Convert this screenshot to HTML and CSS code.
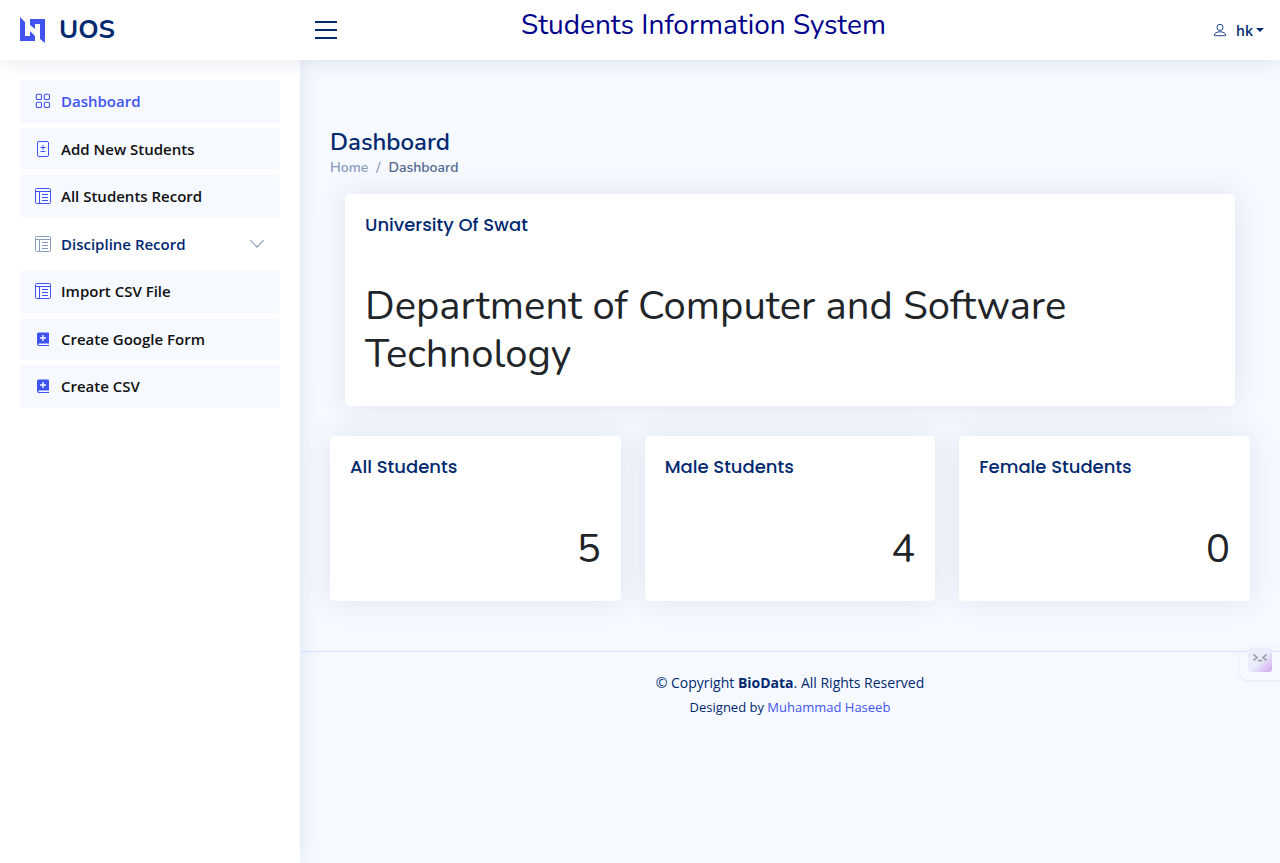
FILE: index.html
```html
<!DOCTYPE html>
<html lang="en">
<head>
<meta charset="utf-8">
<meta name="viewport" content="width=device-width, initial-scale=1">
<title>Dashboard - UOS</title>
<link rel="stylesheet" href="styles.css">
</head>
<body>
<svg class="sprite" aria-hidden="true">
  <symbol id="i-layout" viewBox="0 0 16 16">
    <path fill="none" stroke="currentColor" d="M1.5.5h13a1 1 0 0 1 1 1v13a1 1 0 0 1-1 1h-13a1 1 0 0 1-1-1v-13a1 1 0 0 1 1-1zM.5 3.500h15M4.500 3.500v12M7 6.500h6M7 9.500h6M7 12.500h6"/>
  </symbol>
  <symbol id="i-book" viewBox="0 0 16 16">
    <path fill="currentColor" fill-rule="evenodd" d="M3.500 1.500h9.500a1 1 0 0 1 1 1v10H4a.8.8 0 0 0 0 1.500h10v1H4a2 2 0 0 1-2-2V3a1.500 1.500 0 0 1 1.500-1.500zM7.300 4v2.300H5v1.400h2.300V10h1.400V7.700H11V6.300H8.700V4z"/>
  </symbol>
</svg>

<header class="header">
  <div class="brand">
    <a class="logo" href="#">
      <svg width="26" height="26" viewBox="0 0 26 26" aria-hidden="true"><path fill="#4154f1" d="M0 0l5 5v14h5v-5l5 5v5H0zM10 2h15v24l-5-4V7h-5v5l-5-4z"/></svg>
      <span>UOS</span>
    </a>
    <button class="toggle" type="button" aria-label="Toggle sidebar">
      <svg width="22" height="18" viewBox="0 0 22 18" aria-hidden="true"><path d="M0 1h22M0 9h22M0 17h22" stroke="currentColor" stroke-width="2"/></svg>
    </button>
  </div>
  <p class="system-name">Students Information System</p>
  <button class="profile" type="button">
    <svg width="14" height="14" viewBox="0 0 16 16" fill="none" stroke="currentColor" aria-hidden="true"><circle cx="8" cy="5" r="3.500"/><path d="M1.500 14c0-2.500 3-4 6.500-4s6.500 1.500 6.500 4c0 .3-.2.500-.5.500H2c-.3 0-.5-.2-.5-.5z"/></svg>
    <span>hk</span>
    <i class="caret"></i>
  </button>
</header>

<div class="layout">
  <nav class="sidebar" aria-label="Main">
    <a class="nav-link active" href="#"><svg viewBox="0 0 16 16" fill="none" stroke="currentColor" stroke-width="1.100" aria-hidden="true"><rect x="1.300" y="1.300" width="5.200" height="5.200" rx="1.300"/><rect x="9.300" y="1.300" width="5.200" height="5.200" rx="1.300"/><rect x="1.300" y="9.300" width="5.200" height="5.200" rx="1.300"/><rect x="9.300" y="9.300" width="5.200" height="5.200" rx="1.300"/></svg>Dashboard</a>
    <a class="nav-link" href="#"><svg viewBox="0 0 16 16" fill="none" stroke="currentColor" aria-hidden="true"><rect x="2.500" y=".5" width="11" height="15" rx="1.500"/><path d="M5.500 6.500h5M8 4v5M5.500 10.500h5"/></svg>Add New Students</a>
    <a class="nav-link" href="#"><svg aria-hidden="true"><use href="#i-layout"/></svg>All Students Record</a>
    <a class="nav-link collapsed" href="#"><svg aria-hidden="true"><use href="#i-layout"/></svg>Discipline Record<svg class="chevron" viewBox="0 0 16 16" fill="none" stroke="currentColor" stroke-width="1.200" stroke-linecap="round" stroke-linejoin="round" aria-hidden="true"><path d="M1.700 4.700L8 11l6.300-6.300"/></svg></a>
    <a class="nav-link" href="#"><svg aria-hidden="true"><use href="#i-layout"/></svg>Import CSV File</a>
    <a class="nav-link" href="#"><svg aria-hidden="true"><use href="#i-book"/></svg>Create Google Form</a>
    <a class="nav-link" href="#"><svg aria-hidden="true"><use href="#i-book"/></svg>Create CSV</a>
  </nav>

  <div class="page">
    <main class="main">
      <h1 class="page-title">Dashboard</h1>
      <nav class="breadcrumb" aria-label="Breadcrumb"><a href="#">Home</a><span>/</span><span class="current">Dashboard</span></nav>
      <section class="card banner">
        <h2 class="card-title">University Of Swat</h2>
        <p class="display">Department of Computer and Software Technology</p>
      </section>
      <div class="stats">
        <section class="card"><h2 class="card-title">All Students</h2><p class="display number">5</p></section>
        <section class="card"><h2 class="card-title">Male Students</h2><p class="display number">4</p></section>
        <section class="card"><h2 class="card-title">Female Students</h2><p class="display number">0</p></section>
      </div>
    </main>
    <footer class="footer">
      <p class="copyright">© Copyright <strong>BioData</strong>. All Rights Reserved</p>
      <p class="credits">Designed by <a href="#">Muhammad Haseeb</a></p>
    </footer>
  </div>
</div>

<button class="assistant" type="button" aria-label="Assistant">
  <svg width="24" height="24" viewBox="0 0 24 24" aria-hidden="true">
    <defs><linearGradient id="g" x1="0" y1="0" x2="1" y2="1"><stop offset=".5" stop-color="#eceffa"/><stop offset="1" stop-color="#cfa8f0"/></linearGradient></defs>
    <rect width="24" height="24" rx="3" fill="url(#g)"/>
    <path d="M5.500 6.500l3.500 3-3.500 3M18.500 6.500l-3.500 3 3.500 3M10 12q2 1.500 4 0" fill="none" stroke="#a3a5b3" stroke-width="1.800"/>
  </svg>
</button>
</body>
</html>
```
FILE: styles.css
```css
* { box-sizing: border-box; }
body {
  margin: 0;
  min-height: 100vh;
  display: flex;
  flex-direction: column;
  background: #f6f9ff;
  color: #444;
  font: 16px/1.5 "Open Sans", sans-serif;
}
h1, h2, p { margin: 0; }
a { text-decoration: none; }
button { border: 0; padding: 0; background: none; font: inherit; cursor: pointer; }
.sprite { display: none; }

.header {
  position: sticky;
  top: 0;
  z-index: 2;
  display: flex;
  align-items: center;
  height: 60px;
  padding: 0 16px 0 20px;
  background: #fff;
  color: #012970;
  box-shadow: 0 2px 20px rgba(1, 41, 112, 0.1);
}
.brand { display: flex; align-items: center; justify-content: space-between; width: 317px; }
.logo { display: flex; align-items: center; gap: 13px; color: #012970; font: 700 26px/1.2 Nunito, Lato, sans-serif; }
.toggle { display: flex; color: #012970; }
.system-name {
  flex: 1;
  align-self: flex-start;
  padding: 8px 0 0 184px;
  color: #00008b;
  font: 28px/34px Nunito, Lato, sans-serif;
}
.profile { display: flex; align-items: center; color: #012970; font-size: 14px; font-weight: 600; }
.profile span { margin: 0 3px 0 9px; }
.caret { border: 4px solid transparent; border-top-color: currentColor; border-bottom: 0; }

.layout { flex: 1; display: flex; }
.sidebar {
  flex: 0 0 300px;
  padding: 20px;
  background: #fff;
  box-shadow: 0 0 20px rgba(1, 41, 112, 0.1);
}
.nav-link {
  display: flex;
  align-items: center;
  margin-bottom: 5px;
  padding: 10px 15px;
  border-radius: 4px;
  background: #f6f9ff;
  color: #111;
  font-size: 15px;
  font-weight: 600;
}
.nav-link svg { width: 16px; height: 16px; margin-right: 10px; color: #4154f1; }
.nav-link.active { color: #4154f1; }
.nav-link.collapsed { background: #fff; color: #012970; }
.nav-link.collapsed svg { color: #899bbd; }
.nav-link .chevron { margin: 0 0 0 auto; }

.page { flex: 1; min-width: 0; }
.main { padding: 68px 30px 50px; }
.page-title { color: #012970; font: 600 24px/29px Nunito, Lato, sans-serif; }
.breadcrumb { display: flex; gap: 8px; color: #899bbd; font: 600 14px/21px Nunito, Lato, sans-serif; }
.breadcrumb a { color: #899bbd; }
.breadcrumb .current { color: #51678f; }
.card {
  padding: 20px 20px 28px;
  border-radius: 5px;
  background: #fff;
  box-shadow: 0 0 30px rgba(1, 41, 112, 0.1);
}
.banner { margin: 16px 15px 30px; }
.card-title { color: #012970; font: 500 18px/22px Poppins, Inter, sans-serif; }
.display { margin-top: 46px; color: #212529; font: 40px/48px Nunito, Lato, sans-serif; }
.number { margin-top: 47px; text-align: right; }
.stats { display: grid; grid-template-columns: repeat(3, 1fr); gap: 24px; }

.footer { padding: 20px 0; border-top: 1px solid #cddfff; color: #012970; text-align: center; }
.copyright { font-size: 14px; line-height: 21px; }
.credits { padding-top: 4px; font-size: 13px; line-height: 20px; }
.credits a { color: #4154f1; }

.assistant {
  position: fixed;
  top: 648px;
  right: 0;
  display: flex;
  padding: 0 8px 8px;
  border-radius: 8px 0 0 8px;
  box-shadow: 0 1px 3px rgba(1, 41, 112, 0.1);
}
```
